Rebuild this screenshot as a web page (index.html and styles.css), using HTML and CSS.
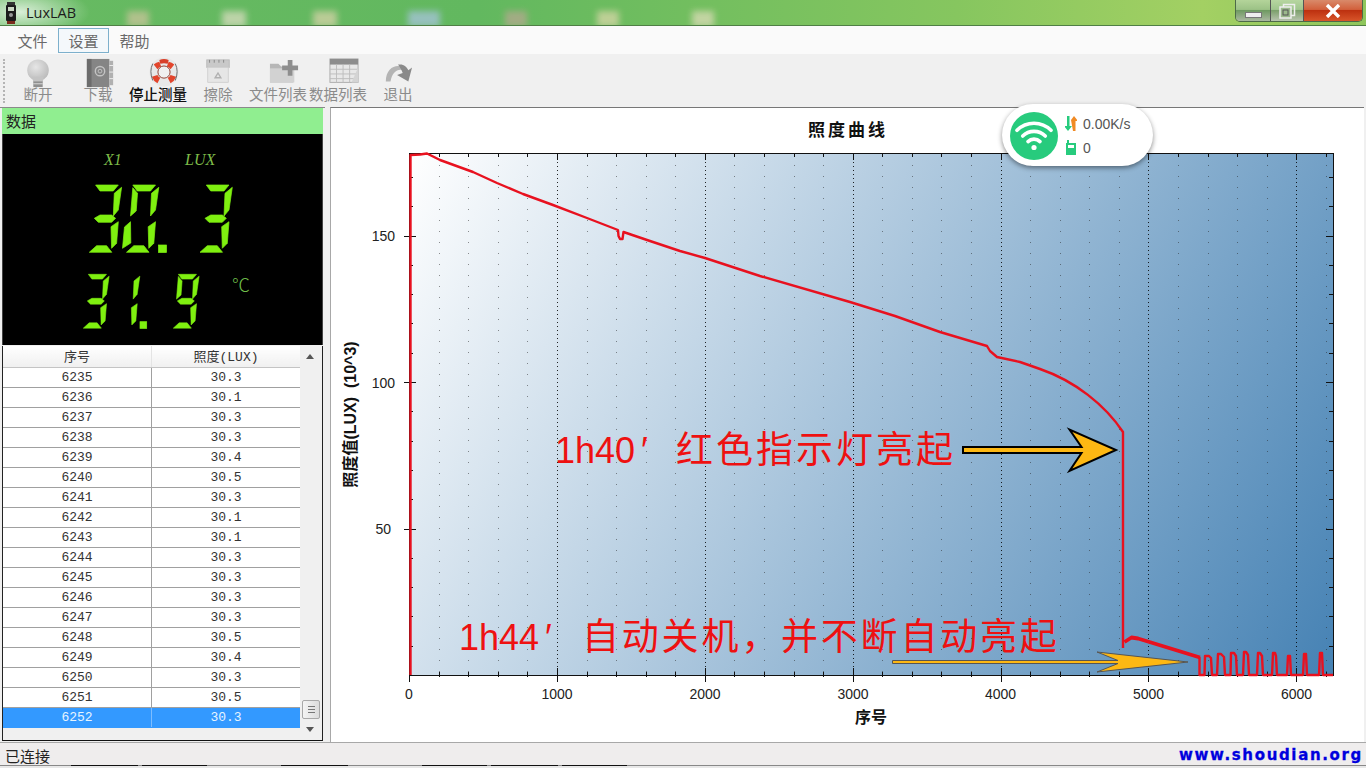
FILE: index.html
```html
<!DOCTYPE html>
<html>
<head>
  <meta charset="utf-8">
  <title>LuxLAB</title>
  <link rel="stylesheet" href="styles.css">
</head>
<body>
  <!-- window title -->
  <div class="titlebar">
    <span class="blur b1"></span><span class="blur b2"></span><span class="blur b3"></span><span class="blur b4"></span>
    <span class="blur b5"></span><span class="blur b6"></span><span class="blur b7"></span>
    <svg class="app-logo" width="12" height="22" viewBox="0 0 12 22">
      <rect x="2" y="0" width="8" height="4" fill="#333"/>
      <rect x="1" y="3" width="10" height="16" rx="1" fill="#1c1c1c"/>
      <rect x="3" y="5" width="6" height="4" fill="#c9d6c2"/>
      <circle cx="6" cy="13" r="2" fill="#999"/>
      <rect x="2" y="19" width="8" height="3" fill="#7a2a1c"/>
    </svg>
    <span class="app-name">LuxLAB</span>
    <div class="win-buttons">
      <div class="win-btn win-min"><span class="min-glyph"></span></div>
      <div class="win-btn win-max">
        <svg width="18" height="16" viewBox="0 0 18 16"><rect x="5.5" y="1.5" width="11" height="11" fill="none" stroke="#eee" stroke-width="1.5"/><rect x="2" y="4" width="11" height="11" fill="#9bb98c" stroke="#eee" stroke-width="1.5"/><rect x="5" y="7" width="5" height="5" fill="none" stroke="#555"/></svg>
      </div>
      <div class="win-btn win-close">
        <svg width="16" height="14" viewBox="0 0 16 14"><path d="M2 1 L14 13 M14 1 L2 13" stroke="#fff" stroke-width="3.4"/></svg>
      </div>
    </div>
  </div>

  <div class="menubar">
    <span class="menu-item">文件</span>
    <span class="menu-item active">设置</span>
    <span class="menu-item">帮助</span>
  </div>

  <div class="toolbar">
    <span class="grip"></span>
    <div class="tool">
      <svg width="30" height="32" viewBox="0 0 30 32"><defs><radialGradient id="bulb" cx="0.4" cy="0.35" r="0.7"><stop offset="0" stop-color="#e6e6e6"/><stop offset="1" stop-color="#b9b9b9"/></radialGradient></defs><circle cx="15" cy="13" r="11.5" fill="url(#bulb)"/><path d="M9 20 L21 20 L20 26 L10 26 Z" fill="#c4c4c4"/><rect x="10" y="25" width="10" height="6" fill="#8f8f8f"/><rect x="10" y="27" width="10" height="1" fill="#ddd"/></svg>
      <span>断开</span>
    </div>
    <div class="tool shift-book">
      <svg width="30" height="32" viewBox="0 0 30 32"><rect x="1" y="1" width="24" height="30" fill="#858585"/><rect x="1" y="1" width="5" height="30" fill="#6c6c6c"/><rect x="25" y="3" width="4" height="26" fill="#b0b0b0"/><path d="M25 8h4M25 15h4M25 22h4" stroke="#eee" stroke-width="1"/><circle cx="15" cy="14" r="5" fill="none" stroke="#c4c4c4" stroke-width="1.5"/><circle cx="15" cy="14" r="2" fill="none" stroke="#c4c4c4"/></svg>
      <span>下载</span>
    </div>
    <div class="tool enabled shift-wide">
      <svg width="34" height="32" viewBox="0 0 34 32"><circle cx="17" cy="15" r="11" fill="none" stroke="#e8e8e8" stroke-width="9"/><path d="M6 7 A13 13 0 0 1 12 4 L14 9 A7 7 0 0 0 10 12 Z M22 4 A13 13 0 0 1 28 7 L24 12 A7 7 0 0 0 20 9 Z M4 20 A14 14 0 0 0 10 27 L13 21 A7 7 0 0 1 10 18 Z M24 27 A14 14 0 0 0 30 20 L24 18 A7 7 0 0 1 21 21 Z" fill="#e2452c"/><path d="M12 2 Q17 0 22 2 L21 6 Q17 5 13 6 Z" fill="#d8402a"/><circle cx="17" cy="15" r="6.5" fill="#f0f0f0" stroke="#8a3a2c"/><path d="M5 6 Q1 14 5 24 M29 6 Q33 14 29 24" stroke="#666" fill="none"/></svg>
      <span>停止测量</span>
    </div>
    <div class="tool">
      <svg width="30" height="32" viewBox="0 0 30 32"><rect x="3" y="2" width="24" height="8" fill="#c9c9c9" stroke="#bbb"/><path d="M6 2v3M11 2v3M16 2v3M21 2v3" stroke="#888"/><path d="M4 10 H26 V26 H4 Z" fill="#e6e6e6" stroke="#d0d0d0"/><path d="M12 21 L15 16 L18 21 Z" fill="none" stroke="#b0b0b0" stroke-width="1.5"/></svg>
      <span>擦除</span>
    </div>
    <div class="tool shift-wide">
      <svg width="32" height="32" viewBox="0 0 32 32"><path d="M1 6 H10 L13 9 H26 V26 H1 Z" fill="#b7b7b7"/><path d="M1 11 H27 V26 H1 Z" fill="#d2d2d2"/><path d="M20 2 H25 V8 H31 V13 H25 V19 H20 V13 H14 V8 H20 Z" fill="#8e8e8e"/></svg>
      <span>文件列表</span>
    </div>
    <div class="tool shift-wide">
      <svg width="32" height="32" viewBox="0 0 32 32"><rect x="1" y="1" width="30" height="25" fill="#e8e8e8" stroke="#aaa"/><rect x="1" y="1" width="30" height="6" fill="#8d8d8d"/><path d="M1 12H31M1 17H31M1 22H31M8 7V26M15 7V26M22 7V26" stroke="#bdbdbd"/><path d="M24 26 L31 10 V26 Z" fill="#d4d4d4"/></svg>
      <span>数据列表</span>
    </div>
    <div class="tool">
      <svg width="32" height="32" viewBox="0 0 32 32"><path d="M3 25 C3 12 12 7 19 9 L22 13 C15 11 10 15 8 25 Z" fill="#b4b4b4"/><path d="M16 7 C22 6 25 9 27 13 L31 10 L27 25 L15 18 L21 16 C20 13 18 10 16 7 Z" fill="#8a8a8a"/></svg>
      <span>退出</span>
    </div>
  </div>

  <div class="main">
    <div class="sidebar">
      <div class="panel-head">数据</div>

      <svg class="lcd" width="319" height="211" viewBox="3 134 319 211" role="img" aria-label="X1 30.3 LUX 31.9 ℃">
        <defs>
          <polygon id="sa" points="6.3,0 29,0 24,6 10.7,6"/>
          <polygon id="sb" points="32.3,2.3 29,25 24,31 25,8.3"/>
          <polygon id="sc" points="29,36.7 27.3,58.3 22.3,63.3 21.7,41.7"/>
          <polygon id="sd" points="0,67.3 7.3,60.7 17.3,60.7 22.5,67.3"/>
          <polygon id="se" points="-4,63.3 -2,42 4,36.7 4.3,58"/>
          <polygon id="sf" points="6.3,2.7 11,8.3 9.7,26 4,31"/>
          <polygon id="sg" points="5,33.3 10.7,30 22.3,30 26.3,33.3 22.3,37.3 9,37.3"/>
          <g id="d3"><use href="#sa"/><use href="#sb"/><use href="#sc"/><use href="#sd"/><use href="#sg"/></g>
          <g id="d0"><use href="#sa"/><use href="#sb"/><use href="#sc"/><use href="#sd"/><use href="#se"/><use href="#sf"/></g>
          <g id="d1"><use href="#sb"/><use href="#sc"/></g>
          <g id="d9"><use href="#sa"/><use href="#sb"/><use href="#sc"/><use href="#sd"/><use href="#sf"/><use href="#sg"/></g>
        </defs>
        <text class="lcd-label" x="104" y="165">X1</text>
        <text class="lcd-label" x="185" y="165">LUX</text>
        <g class="seg">
          <use href="#d3" x="89.3" y="185"/>
          <use href="#d0" x="126.5" y="185"/>
          <rect x="158.5" y="245" width="8" height="7.5"/>
          <use href="#d3" x="200" y="185"/>
          <use href="#d3" transform="translate(83.3 274.3) scale(.8)"/>
          <use href="#d1" transform="translate(114 274.3) scale(.8)"/>
          <rect x="140" y="321.7" width="6.7" height="6.7"/>
          <use href="#d9" transform="translate(173.3 274.3) scale(.8)"/>
        </g>
        <text class="lcd-unit" x="232" y="292">℃</text>
      </svg>

      <div class="table-wrap">
        <div class="table-scroll">
          <table class="data-table">
            <thead><tr><th>序号</th><th>照度(LUX)</th></tr></thead>
            <tbody>
              <tr><td>6235</td><td>30.3</td></tr>
              <tr><td>6236</td><td>30.1</td></tr>
              <tr><td>6237</td><td>30.3</td></tr>
              <tr><td>6238</td><td>30.3</td></tr>
              <tr><td>6239</td><td>30.4</td></tr>
              <tr><td>6240</td><td>30.5</td></tr>
              <tr><td>6241</td><td>30.3</td></tr>
              <tr><td>6242</td><td>30.1</td></tr>
              <tr><td>6243</td><td>30.1</td></tr>
              <tr><td>6244</td><td>30.3</td></tr>
              <tr><td>6245</td><td>30.3</td></tr>
              <tr><td>6246</td><td>30.3</td></tr>
              <tr><td>6247</td><td>30.3</td></tr>
              <tr><td>6248</td><td>30.5</td></tr>
              <tr><td>6249</td><td>30.4</td></tr>
              <tr><td>6250</td><td>30.3</td></tr>
              <tr><td>6251</td><td>30.5</td></tr>
              <tr class="selected"><td>6252</td><td>30.3</td></tr>
            </tbody>
          </table>
        </div>
        <div class="scrollbar">
          <span class="arrow-up"></span>
          <span class="thumb"></span>
          <span class="arrow-down"></span>
        </div>
      </div>
    </div>

    <div class="chart-panel">
      <!-- viewBox keeps the numbers in screen pixels, easier to read off the axes -->
      <svg class="chart" width="1033" height="634" viewBox="331 108 1033 634">
        <defs>
          <linearGradient id="plotbg" gradientUnits="userSpaceOnUse" x1="409" y1="153" x2="1333" y2="675">
            <stop offset="0" stop-color="#ffffff"/>
            <stop offset="1" stop-color="#4682b4"/>
          </linearGradient>
        </defs>

        <text class="chart-title" x="848" y="136">照度曲线</text>

        <rect class="plot-bg" x="409.5" y="153.5" width="924" height="522"/>

        <!-- grid -->
        <path class="grid-minor" d="M439.5 154V675M468.5 154V675M498.5 154V675M527.5 154V675M587.5 154V675M616.5 154V675M646.5 154V675M675.5 154V675M734.5 154V675M764.5 154V675M794.5 154V675M823.5 154V675M882.5 154V675M912.5 154V675M941.5 154V675M971.5 154V675M1030.5 154V675M1060.5 154V675M1089.5 154V675M1119.5 154V675M1178.5 154V675M1208.5 154V675M1237.5 154V675M1267.5 154V675M1326.5 154V675"/>
        <path class="grid-major" d="M557.5 154V675M705.5 154V675M853.5 154V675M1001.5 154V675M1148.5 154V675M1296.5 154V675"/>

        <!-- axes and ticks -->
        <rect class="axis" x="409.5" y="153.5" width="924" height="522"/>
        <path class="tick" d="M439.5 672V677M468.5 672V677M498.5 672V677M527.5 672V677M587.5 672V677M616.5 672V677M646.5 672V677M675.5 672V677M734.5 672V677M764.5 672V677M794.5 672V677M823.5 672V677M882.5 672V677M912.5 672V677M941.5 672V677M971.5 672V677M1030.5 672V677M1060.5 672V677M1089.5 672V677M1119.5 672V677M1178.5 672V677M1208.5 672V677M1237.5 672V677M1267.5 672V677M1326.5 672V677"/>
        <path class="tick" d="M409.5 668V682M557.5 668V682M705.5 668V682M853.5 668V682M1001.5 668V682M1148.5 668V682M1296.5 668V682"/>
        <path class="tick" d="M439.5 153V157M468.5 153V157M498.5 153V157M527.5 153V157M587.5 153V157M616.5 153V157M646.5 153V157M675.5 153V157M734.5 153V157M764.5 153V157M794.5 153V157M823.5 153V157M882.5 153V157M912.5 153V157M941.5 153V157M971.5 153V157M1030.5 153V157M1060.5 153V157M1089.5 153V157M1119.5 153V157M1178.5 153V157M1208.5 153V157M1237.5 153V157M1267.5 153V157M1326.5 153V157M557.5 153V160M705.5 153V160M853.5 153V160M1001.5 153V160M1148.5 153V160M1296.5 153V160"/>
        <path class="tick" d="M409 646.5H413M409 616.5H413M409 587.5H413M409 558.5H413M409 499.5H413M409 470.5H413M409 441.5H413M409 411.5H413M409 353.5H413M409 323.5H413M409 294.5H413M409 265.5H413M409 206.5H413M409 177.5H413M404 529.5H416M404 382.5H416M404 236.5H416"/>
        <path class="tick" d="M1329 646.5H1334M1329 616.5H1334M1329 587.5H1334M1329 558.5H1334M1329 499.5H1334M1329 470.5H1334M1329 441.5H1334M1329 411.5H1334M1329 353.5H1334M1329 323.5H1334M1329 294.5H1334M1329 265.5H1334M1329 206.5H1334M1329 177.5H1334M1326 529.5H1334M1326 382.5H1334M1326 236.5H1334"/>

        <!-- axis numbers -->
        <g class="x-labels">
          <text x="409" y="699">0</text><text x="557" y="699">1000</text><text x="705" y="699">2000</text>
          <text x="853" y="699">3000</text><text x="1000.5" y="699">4000</text><text x="1148.5" y="699">5000</text><text x="1296.5" y="699">6000</text>
        </g>
        <g class="y-labels">
          <text x="395" y="241">150</text><text x="395" y="388">100</text><text x="391" y="534">50</text>
        </g>
        <text class="axis-title" x="871" y="723">序号</text>
        <text class="axis-title y-title" transform="translate(356 414.5) rotate(-90)">照度值(LUX)&#160;&#160;(10^3)</text>

        <!-- curve -->
        <path class="curve" d="M410.5 675V155L420 154.5L427 153.5L440 160L473 172L497 183L523 194L553 205L587 218L618 230L618.5 236L620 239L622.5 239L623.5 232L650 241L680 251L705 258L760 276L850 302L895 316L940 332L987 346L990 351L997 357L1020 362L1040 369C1075 381 1105 405 1123 432V648"/>
        <path class="curve curve-thick" d="M1124.5 642L1131.5 637.5L1138 638.5L1200 657.5"/>
        <path class="curve" d="M1199.5 657V675H1204.5L1205 656H1209L1211 658L1212 675H1217L1218 654H1221L1224 657L1225 675H1230.5L1231 653H1234L1236 656L1237 675H1243L1244 652H1246L1248 655L1249 675H1257L1258 653H1260L1262 656L1263 675H1272L1273 653H1275L1276 656L1277 675H1287L1288 656H1290L1291 675H1303L1304 654H1306L1307 675H1319L1320 653H1322L1323 675H1333"/>

        <!-- notes added on the screenshot -->
        <text class="note" y="463"><tspan class="note-latin" x="555">1h40</tspan><tspan class="note-latin" x="641">′</tspan><tspan x="676">红色指示灯亮起</tspan></text>
        <text class="note note-long" y="650"><tspan class="note-latin" x="459">1h44</tspan><tspan class="note-latin" x="545">′</tspan><tspan x="582">自动关机，并不断自动亮起</tspan></text>
        <path class="arrow-big" d="M963 447H1081.5L1069.5 429.5L1116 450L1069.5 471L1081.5 453H963Z"/>
        <path class="arrow-small" d="M892.5 660.5H1118L1097 652L1188 662L1097 672L1118 663.5H892.5Z"/>
      </svg>

      <!-- floating net speed widget, sits on top of the app -->
      <div class="net-widget">
        <svg width="48" height="48" viewBox="0 0 48 48"><circle cx="24" cy="24" r="24" fill="#27cb7d"/><g fill="none" stroke="#fff" stroke-width="3.6" stroke-linecap="round"><path d="M7 18.3A24 24 0 0 1 41 18.3"/><path d="M12.7 24A16 16 0 0 1 35.3 24"/><path d="M18 29.6A8.5 8.5 0 0 1 30 29.6"/></g><circle cx="24" cy="35.5" r="2.6" fill="#fff"/></svg>
        <div class="net-lines">
          <div class="net-line">
            <svg width="12" height="15" viewBox="0 0 12 15"><path d="M2 0H4.5V10H7L3 15L-1 10H2Z" fill="#27cb7d"/><path d="M8 15H10.5V5H13L9 0L6 4Z" fill="#f08a24"/></svg>
            <span>0.00K/s</span>
          </div>
          <div class="net-line">
            <svg width="12" height="15" viewBox="0 0 12 15"><path d="M2 0H4V3H11V15H1V3H2Z" fill="#27cb7d"/><rect x="3" y="5" width="6" height="3" fill="#fff"/></svg>
            <span>0</span>
          </div>
        </div>
      </div>
    </div>
  </div>

  <div class="statusbar">
    <span class="status-text">已连接</span>
    <span class="watermark">www.shoudian.org</span>
  </div>
  <div class="bottom-edge">
    <span class="e1"></span><span class="e2"></span><span class="e3"></span><span class="e4"></span><span class="e5"></span><span class="e6"></span>
  </div>
</body>
</html>
```

FILE: styles.css
```css
/* LuxLAB main window */
html, body {
  margin: 0;
  padding: 0;
}

body {
  width: 1366px;
  height: 768px;
  overflow: hidden;
  display: flex;
  flex-direction: column;
  background-color: #f0f0f0;
  font-family: "Noto Sans CJK SC", "Liberation Sans", sans-serif;
}

/* title bar */
.titlebar {
  position: relative;
  height: 26px;
  flex: none;
  box-sizing: border-box;
  display: flex;
  align-items: center;
  padding-left: 5px;
  border-bottom: 1px solid #4f7f45;
  overflow: hidden;
  background:
    radial-gradient(ellipse 70px 26px at 20px 12px, rgba(255,255,255,.75), rgba(255,255,255,0)),
    linear-gradient(90deg, #67ba62 0%, #62b85f 35%, #86c65f 70%, #a3d063 88%, #8fc65c 100%);
}

.blur {
  position: absolute;
  top: 11px;
  height: 16px;
  filter: blur(3px);
  opacity: .75;
}
.b1 { left: 127px; width: 22px; background-color: #c9c49a; }
.b2 { left: 222px; width: 24px; background-color: #d9dcc0; }
.b3 { left: 313px; width: 24px; background-color: #d6d2a8; }
.b4 { left: 408px; width: 32px; background-color: #a8c4dc; }
.b5 { left: 505px; width: 22px; background-color: #b6a890; }
.b6 { left: 597px; width: 22px; background-color: #d8d6a8; }
.b7 { left: 692px; width: 22px; background-color: #dcdcb8; }

.app-logo {
  position: relative;
  margin-right: 9px;
}

.app-name {
  position: relative;
  font-family: "Open Sans", sans-serif;
  font-size: 14.5px;
  color: #1c1c1c;
}

.win-buttons {
  position: absolute;
  top: 0;
  right: 3px;
  height: 22px;
  display: flex;
  box-sizing: border-box;
  border: 1px solid #4d6a48;
  border-top: none;
  border-radius: 0 0 5px 5px;
  overflow: hidden;
}

.win-btn {
  display: flex;
  align-items: center;
  justify-content: center;
  box-sizing: border-box;
}

.win-min {
  width: 35px;
  border-right: 1px solid #555;
  background: linear-gradient(#b4d49a 0%, #9cc286 45%, #6f9a62 50%, #aab8a0 100%);
}
.min-glyph {
  width: 15px;
  height: 4px;
  margin-top: 8px;
  background-color: #eee;
  border: 1px solid #777;
}
.win-max {
  width: 33px;
  border-right: 1px solid #555;
  background: linear-gradient(#b6d6a0 0%, #a0c68e 45%, #7ca06c 50%, #b8c4ae 100%);
}
.win-close {
  flex: 1;
  width: 58px;
  background: linear-gradient(#d98a6a 0%, #d2603c 45%, #bd3110 50%, #d8552a 100%);
}

/* menu */
.menubar {
  height: 28px;
  flex: none;
  display: flex;
  align-items: center;
  padding-left: 7px;
  background-color: #fafafa;
}

.menu-item {
  box-sizing: border-box;
  width: 51px;
  height: 25px;
  line-height: 24px;
  text-align: center;
  font-size: 15px;
  color: #6a6a6a;
  border: 1px solid transparent;
}
.menu-item.active {
  border-color: #7db0cc;
  background-color: #f4f8fb;
}

/* toolbar */
.toolbar {
  height: 53px;
  flex: none;
  display: flex;
  box-sizing: border-box;
  padding-left: 3px;
  background-color: #f0f0f0;
}

.grip {
  width: 2px;
  height: 44px;
  margin: 5px 1px 0 0;
  border-left: 2px dotted #b4b4b4;
}

.tool {
  width: 60px;
  height: 53px;
  display: flex;
  flex-direction: column;
  align-items: center;
  padding-top: 4px;
  box-sizing: border-box;
  font-size: 14.5px;
  color: #8b8b8b;
}
.tool svg {
  flex: none;
  height: 30px;
}
.tool span {
  position: relative;
  line-height: 20px;
  white-space: nowrap;
  margin-top: -4px;
}
.tool.enabled {
  color: #111;
  font-weight: 500;
}
/* these icons sit right of their label */
.shift-book svg {
  margin-left: 4px;
}
.shift-wide svg {
  margin-left: 11px;
}

/* main area */
.main {
  flex: none;
  height: 635px;
  display: flex;
  gap: 5px;
}

.sidebar {
  width: 325px;
  box-sizing: border-box;
  border-top: 1px solid #8a8a8a;
  padding: 0 2px 0 2px;
  display: flex;
  flex-direction: column;
}

.panel-head {
  height: 26px;
  line-height: 25px;
  flex: none;
  padding-left: 4px;
  font-size: 15px;
  color: #222;
  background-color: #90ee90;
}

.lcd {
  display: block;
  flex: none;
  background-color: #000;
  border-left: 1px solid #444;
  border-right: 1px solid #444;
}
.seg {
  fill: #7ff010;
  stroke: #7ff010;
  stroke-width: .7;
}
.lcd-label {
  font-family: "Liberation Serif", serif;
  font-style: italic;
  font-size: 16px;
  fill: #7dba48;
}
.lcd-unit {
  font-family: "Noto Sans CJK SC", sans-serif;
  font-size: 18px;
  font-weight: 300;
  fill: #6fbf4a;
}

/* table */
.table-wrap {
  height: 395px;
  flex: none;
  box-sizing: border-box;
  margin-top: 1px;
  display: flex;
  background-color: #f0f0f0;
  border-left: 1px solid #222;
  border-right: 1px solid #222;
  border-bottom: 1px solid #111;
}

.table-scroll {
  width: 297px;
  flex: none;
}

.data-table {
  width: 297px;
  table-layout: fixed;
  border-collapse: collapse;
  font-family: "Liberation Mono", "Noto Sans CJK SC", monospace;
  font-size: 13px;
  color: #333;
}
.data-table th {
  height: 19px;
  padding: 0 0 2px 0;
  font-weight: normal;
  background: linear-gradient(#fff, #f0f0f0);
  border-bottom: 1px solid #c4c4c4;
  border-right: 1px solid #e4e4e4;
}
.data-table td {
  height: 19px;
  padding: 0;
  text-align: center;
  background-color: #fff;
  border-bottom: 1px solid #a0a0a0;
  border-right: 1px solid #a0a0a0;
}
.data-table .selected td {
  background-color: #3399ff;
  color: #e6f4ff;
  border-bottom-color: #3399ff;
  border-right-color: #7dbdff;
}
.data-table tr td:last-child,
.data-table tr th:last-child {
  border-right: none;
}

.scrollbar {
  flex: 1;
  position: relative;
  background-color: #f0f0f0;
}
.arrow-up, .arrow-down {
  position: absolute;
  left: 6px;
  width: 0;
  height: 0;
  border-left: 4px solid transparent;
  border-right: 4px solid transparent;
}
.arrow-up {
  top: 8px;
  border-bottom: 5px solid #555;
}
.arrow-down {
  bottom: 8px;
  border-top: 5px solid #555;
}
.thumb {
  position: absolute;
  left: 2px;
  right: 2px;
  bottom: 21px;
  height: 19px;
  box-sizing: border-box;
  border: 1px solid #a8a8a8;
  border-radius: 2px;
  /* three grip lines in the middle */
  background:
    linear-gradient(#777, #777) center 5px / 7px 1px no-repeat,
    linear-gradient(#777, #777) center 8px / 7px 1px no-repeat,
    linear-gradient(#777, #777) center 11px / 7px 1px no-repeat,
    linear-gradient(90deg, #f4f4f4, #dcdcdc);
}

/* chart */
.chart-panel {
  position: relative;
  width: 1034px;
  box-sizing: border-box;
  background-color: #fff;
  border-top: 1px solid #777;
  border-left: 1px solid #a8a8a8;
}
.chart {
  display: block;
}
.plot-bg {
  fill: url(#plotbg);
}
.grid-minor {
  fill: none;
  stroke: #222;
  stroke-width: 1;
  stroke-dasharray: 1 10;
  opacity: .5;
}
.grid-major {
  fill: none;
  stroke: #000;
  stroke-width: 1;
  stroke-dasharray: 1 3;
  opacity: .85;
}
.axis {
  fill: none;
  stroke: #111;
  stroke-width: 1;
}
.tick {
  fill: none;
  stroke: #111;
  stroke-width: 1;
}
.chart text {
  font-family: "Liberation Sans", "Noto Sans CJK SC", sans-serif;
}
.x-labels text {
  font-size: 14px;
  fill: #222;
  text-anchor: middle;
}
.y-labels text {
  font-size: 14px;
  fill: #222;
  text-anchor: end;
}
.chart .chart-title {
  font-family: "Noto Sans CJK SC", sans-serif;
  font-size: 17px;
  font-weight: 700;
  letter-spacing: 3px;
  fill: #111;
  text-anchor: middle;
}
.axis-title {
  font-size: 16px;
  font-weight: 700;
  fill: #111;
  text-anchor: middle;
}
.curve {
  fill: none;
  stroke: #e8111f;
  stroke-width: 2.4;
  stroke-linejoin: round;
}
.curve-thick {
  stroke-width: 3.8;
}
.chart .note {
  font-family: "Noto Sans CJK SC", sans-serif;
  font-size: 37px;
  letter-spacing: 3px;
  fill: #ee1111;
}
.chart .note-long {
  letter-spacing: 2.8px;
}
.chart .note-latin {
  font-family: "Liberation Sans", sans-serif;
  font-size: 36px;
  letter-spacing: 0;
}
.arrow-big {
  fill: #fdb813;
  stroke: #000;
  stroke-width: 2;
}
.arrow-small {
  fill: #fdb813;
  stroke: #555;
  stroke-width: 1;
}

/* floating widget */
.net-widget {
  position: absolute;
  left: 671px;
  top: -4px;
  width: 151px;
  height: 62px;
  box-sizing: border-box;
  padding: 8px 0 0 8px;
  display: flex;
  gap: 7px;
  background-color: #fff;
  border-radius: 31px;
  box-shadow: 0 2px 5px rgba(0,0,0,.45);
  color: #555;
  font-family: "Liberation Sans", sans-serif;
  font-size: 14px;
}
.net-lines {
  padding-top: 4px;
  display: flex;
  flex-direction: column;
  gap: 9px;
}
.net-line {
  display: flex;
  align-items: center;
  gap: 6px;
  height: 15px;
}

/* status bar */
.statusbar {
  height: 23px;
  flex: none;
  box-sizing: border-box;
  border-top: 1px solid #a8a8a8;
  display: flex;
  align-items: center;
  justify-content: space-between;
  padding: 0 3px 0 5px;
  background-color: #efeded;
}
.status-text {
  margin-top: 3px;
  font-size: 15px;
  color: #222;
}
.watermark {
  margin-top: 1px;
  font-family: "DejaVu Sans", sans-serif;
  font-weight: 700;
  font-size: 15px;
  letter-spacing: 1.65px;
  color: #0000dd;
  -webkit-text-stroke: .3px #0000dd;
}

.bottom-edge {
  height: 3px;
  flex: none;
  position: relative;
  background-color: #e8e8e8;
  border-top: 1px solid #888;
  box-sizing: border-box;
}
.bottom-edge span {
  position: absolute;
  top: -1px;
  height: 1px;
  background-color: #111;
}
.e1 { left: 71px; width: 67px; }
.e2 { left: 142px; width: 65px; }
.e3 { left: 281px; width: 67px; }
.e4 { left: 422px; width: 65px; }
.e5 { left: 491px; width: 67px; }
.e6 { left: 562px; width: 65px; }
```
